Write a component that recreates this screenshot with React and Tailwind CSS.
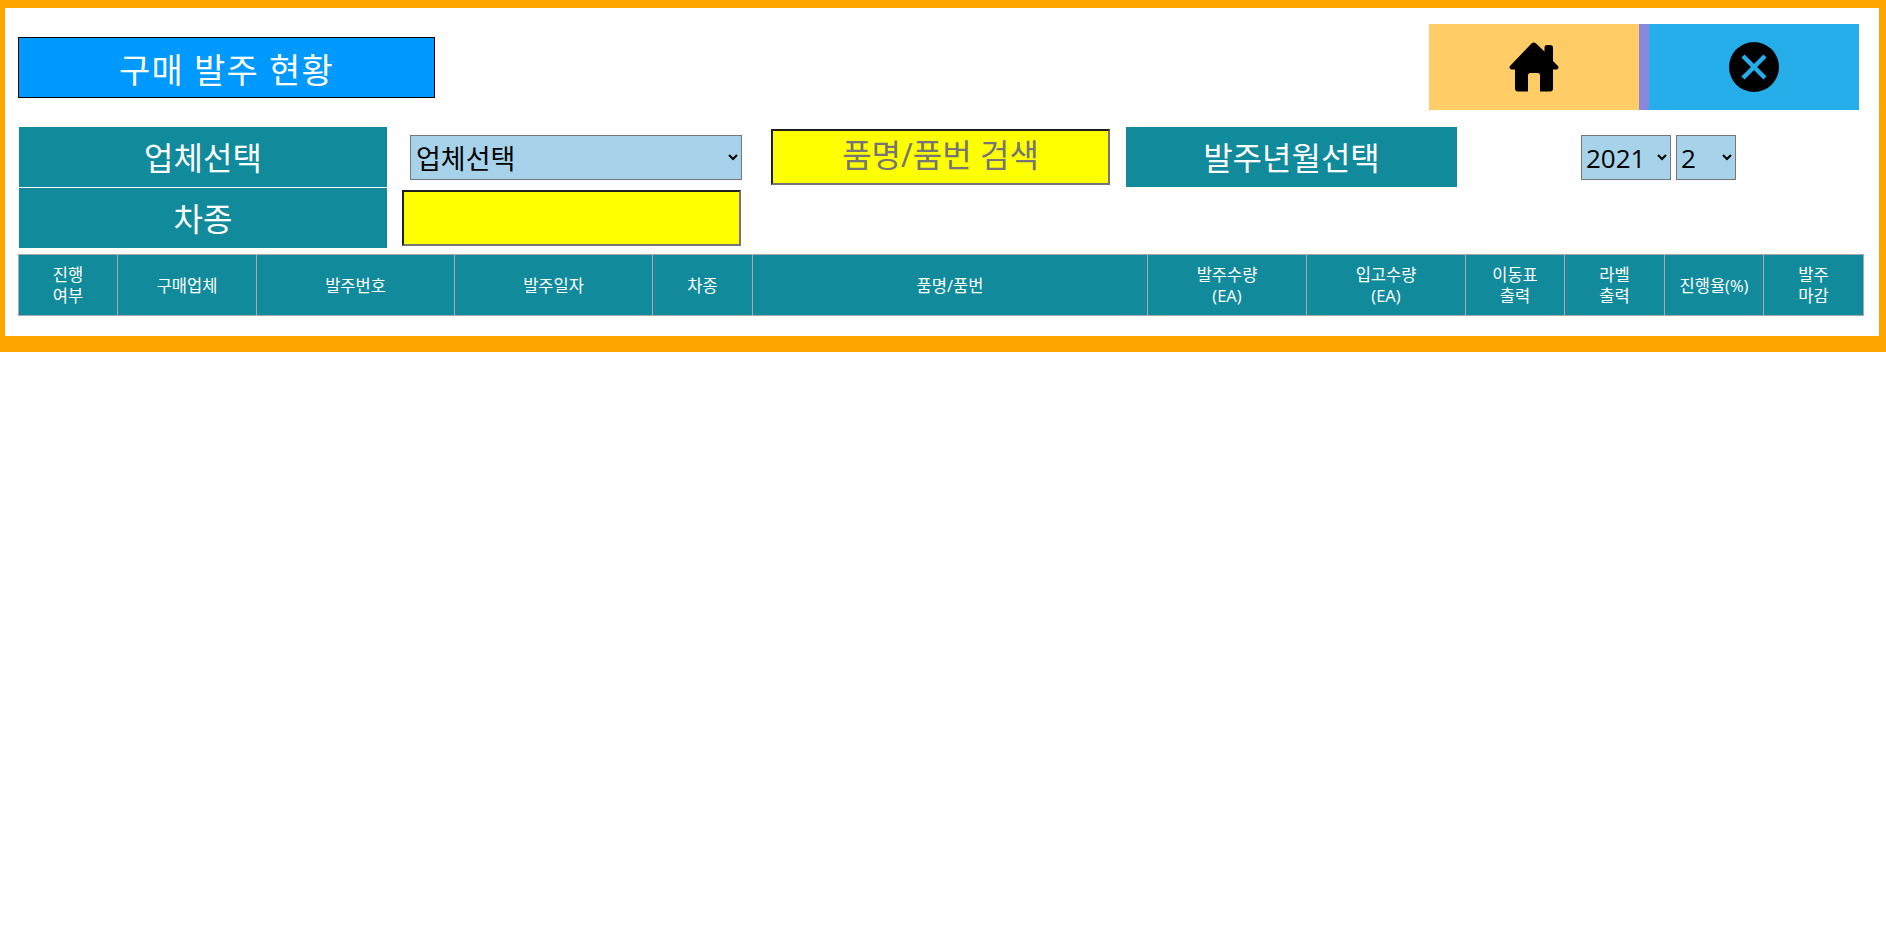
import React from 'react';

const font = "font-['Open_Sans','Noto_Sans_CJK_KR',sans-serif]";

const columns = [
  { label: ['진행', '여부'], width: 'w-[99px]' },
  { label: ['구매업체'], width: 'w-[139px]' },
  { label: ['발주번호'], width: 'w-[198px]' },
  { label: ['발주일자'], width: 'w-[198px]' },
  { label: ['차종'], width: 'w-[100px]' },
  { label: ['품명/품번'], width: 'w-[395px]' },
  { label: ['발주수량', '(EA)'], width: 'w-[159px]' },
  { label: ['입고수량', '(EA)'], width: 'w-[159px]' },
  { label: ['이동표', '출력'], width: 'w-[99px]' },
  { label: ['라벨', '출력'], width: 'w-[100px]' },
  { label: ['진행율(%)'], width: 'w-[99px]' },
  { label: ['발주', '마감'], width: 'w-[100px]' },
];

const HomeIcon = () => (
  <svg viewBox="0 0 50 50" className="w-[50px] h-[50px]" fill="#000">
    <path d="M22.5 1.5Q24.7 -0.3 27 1.5L35.5 9.5V5.5Q35.5 3 38 3H41Q44 3 44 5.5V19L49 24Q50.5 26.5 47.5 27.5H44V46.5Q44 49.5 41 49.5H31V33.5Q31 31 28.5 31H21.5Q19 31 19 33.5V49.5H9Q6 49.5 6 46.5V27.5H2.5Q-0.5 26.5 1 24Z" />
  </svg>
);

const CloseIcon = () => (
  <svg viewBox="0 0 50 50" className="w-[50px] h-[50px]">
    <circle cx="25" cy="25" r="25" fill="#000" />
    <path d="M14 14L36 36M36 14L14 36" stroke="#25aeea" strokeWidth="4.5" fill="none" />
  </svg>
);

const Label = ({ className, children }) => (
  <div className={`h-[60px] pt-[1px] bg-[#118b9b] text-white text-[32px] flex items-center justify-center ${className}`}>
    {children}
  </div>
);

const yellowInput =
  'h-[56px] w-[339px] pb-[6px] bg-[#ffff00] border-2 border-t-[#1f1f1f] border-l-[#1f1f1f] border-r-[#767676] border-b-[#767676] text-center text-[32px] placeholder:text-[#757575] outline-none';

const blueSelect = 'h-[45px] bg-[#a6d3e9] border border-[#767676] text-[26px] text-black';

export default function App() {
  return (
    <div className={`${font} bg-white min-h-screen`}>
      <div className="h-[352px] border-t-[8px] border-l-[5px] border-r-[7px] border-b-[16px] border-[#ffa500] bg-white">
        <div className="flex items-start justify-between pt-[16px] pl-[13px] pr-[20px]">
          <div className="mt-[13px] w-[417px] h-[61px] pt-[6px] bg-[#0099ff] border border-black text-white text-[34px] tracking-[1.2px] flex items-center justify-center">
            구매 발주 현황
          </div>
          <div className="flex h-[86px]">
            <button className="w-[210px] bg-[#ffcc66] flex items-center justify-center">
              <HomeIcon />
            </button>
            <div className="w-[10px] bg-[#8888dd]" />
            <button className="w-[210px] bg-[#25aeea] flex items-center justify-center">
              <CloseIcon />
            </button>
          </div>
        </div>

        <div className="flex items-start pl-[14px] mt-[17px]">
          <Label className="w-[368px]">업체선택</Label>
          <select className={`${blueSelect} w-[332px] ml-[23px] mt-[8px] pl-[1px] pt-[2px] text-[27px]`} defaultValue="업체선택">
            <option>업체선택</option>
          </select>
          <input className={`${yellowInput} ml-[29px] mt-[2px]`} placeholder="품명/품번 검색" />
          <Label className="w-[331px] ml-[16px]">발주년월선택</Label>
          <select className={`${blueSelect} w-[90px] ml-[124px] mt-[8px]`} defaultValue="2021">
            <option>2021</option>
          </select>
          <select className={`${blueSelect} w-[60px] ml-[5px] mt-[8px]`} defaultValue="2">
            <option>2</option>
          </select>
        </div>

        <div className="flex items-start pl-[14px] mt-[1px]">
          <Label className="w-[368px]">차종</Label>
          <input className={`${yellowInput} ml-[15px] mt-[2px]`} />
        </div>

        <table className="ml-[13px] mt-[6px] w-[1845px] h-[62px] table-fixed border-collapse bg-[#118b9b] text-white text-[16.5px] leading-[21px]">
          <thead>
            <tr>
              {columns.map((col) => (
                <th key={col.label.join('')} className={`${col.width} border border-[#aaaaaa] font-normal text-center p-0`}>
                  {col.label.map((line) => (
                    <div key={line}>{line}</div>
                  ))}
                </th>
              ))}
            </tr>
          </thead>
        </table>
      </div>
    </div>
  );
}
